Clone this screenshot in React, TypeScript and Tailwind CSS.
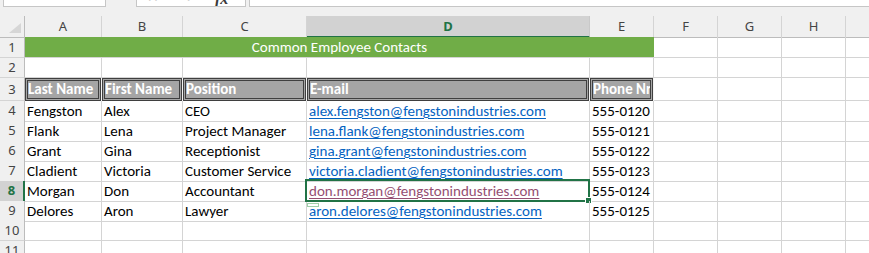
import React from 'react';

// column template: row header, A..H, then the clipped I column
const GRID = 'grid grid-cols-[25px_77px_81px_124px_283px_64px_64px_64px_64px_64px]';
const CELL = 'border-r border-b border-[#d4d4d4] overflow-visible whitespace-nowrap';
const ROWHEAD =
  'border-r border-b border-r-[#bcbcbc] border-b-[#d4d4d4] bg-[#f0f0f0] text-center text-[13px] text-[#444] font-[Noto_Sans,sans-serif]';

const letters = ['A', 'B', 'C', 'D', 'E', 'F', 'G', 'H', 'I'];

const people = [
  ['Fengston', 'Alex', 'CEO', 'alex.fengston@fengstonindustries.com', '555-0120'],
  ['Flank', 'Lena', 'Project Manager', 'lena.flank@fengstonindustries.com', '555-0121'],
  ['Grant', 'Gina', 'Receptionist', 'gina.grant@fengstonindustries.com', '555-0122'],
  ['Cladient', 'Victoria', 'Customer Service', 'victoria.cladient@fengstonindustries.com', '555-0123'],
  ['Morgan', 'Don', 'Accountant', 'don.morgan@fengstonindustries.com', '555-0124'],
  ['Delores', 'Aron', 'Lawyer', 'aron.delores@fengstonindustries.com', '555-0125'],
];

function FormulaBar() {
  return (
    <div className="h-[16px] bg-[#f0f0f0] flex items-start">
      <div className="ml-[3px] w-[103px] h-[7px] bg-white border border-t-0 border-[#c6c6c6]" />
      <div className="ml-[30px] w-[110px] h-[7px] bg-white border border-t-0 border-[#c6c6c6] overflow-hidden">
        <div className="flex items-start -mt-[13px] h-[20px] font-['Liberation_Serif',serif]">
          <span className="ml-[10px] text-[14px] text-[#c4c4c4]">✕</span>
          <span className="ml-[26px] text-[14px] text-[#c4c4c4]">✓</span>
          <span className="ml-[18px] text-[16px] italic font-bold text-[#3a3a3a]">fx</span>
        </div>
      </div>
      <div className="ml-[3px] flex-1 h-[7px] bg-white border border-t-0 border-r-0 border-[#c6c6c6] overflow-hidden">
        <div className="-mt-[15px] pl-[9px] text-[14px] leading-[17px] font-['Carlito','Lato',sans-serif] text-black whitespace-nowrap">
          don.morgan@fengstonindustries.com
        </div>
      </div>
    </div>
  );
}

function ColumnHeaders() {
  return (
    <div className={`${GRID} h-[21px]`}>
      <div className="border-r border-b border-r-[#bcbcbc] border-b-[#bcbcbc] bg-[#f0f0f0] relative">
        <svg className="absolute left-[9px] top-[7px]" width="13" height="11" viewBox="0 0 13 11">
          <polygon points="12,0 12,10 0,10" fill="#d6d6d6" />
        </svg>
      </div>
      {letters.map((l) =>
        l === 'D' ? (
          <div
            key={l}
            className="border-r border-r-[#c9c9c9] border-b-2 border-b-[#217346] bg-[#d2d2d2] text-center text-[13px] leading-[20px] font-bold text-[#217346] font-[Noto_Sans,sans-serif]"
          >
            {l}
          </div>
        ) : (
          <div
            key={l}
            className="border-r border-b border-r-[#d4d4d4] border-b-[#bcbcbc] bg-[#f0f0f0] text-center text-[13px] leading-[20px] text-[#444] font-[Noto_Sans,sans-serif]"
          >
            {l}
          </div>
        )
      )}
    </div>
  );
}

function Link({ text, visited }: { text: string; visited?: boolean }) {
  return (
    <span
      className={`underline decoration-1 underline-offset-2 ${visited ? 'text-[#954f72]' : 'text-[#0563c1]'}`}
    >
      {text}
    </span>
  );
}

export default function App() {
  return (
    <div className="w-[869px] h-[253px] overflow-hidden bg-white font-['Carlito','Lato',sans-serif] text-[15px] text-black">
      <FormulaBar />
      <ColumnHeaders />

      {/* row 1: merged title */}
      <div className={`${GRID} h-[21px]`}>
        <div className={`${ROWHEAD} leading-[20px]`}>1</div>
        <div className="col-span-5 border-b border-[#d4d4d4] bg-[#70ad47] text-white text-center leading-[20px]">
          Common Employee Contacts
        </div>
        {letters.slice(5).map((l) => (
          <div key={l} className={CELL} />
        ))}
      </div>

      {/* row 2: empty */}
      <div className={`${GRID} h-[20px]`}>
        <div className={`${ROWHEAD} leading-[19px]`}>2</div>
        {letters.map((l) => (
          <div key={l} className={CELL} />
        ))}
      </div>

      {/* row 3: check-cell styled headings */}
      <div className={`${GRID} h-[23px]`}>
        <div className={`${ROWHEAD} leading-[22px]`}>3</div>
        {['Last Name', 'First Name', 'Position', 'E-mail', 'Phone Nr'].map((h) => (
          <div key={h} className="border-r border-[#f4f4f4] whitespace-nowrap">
            <div className="h-full border-[3px] border-double border-[#3f3f3f] bg-[#a5a5a5] text-white font-bold leading-[17px] overflow-hidden">
              {h}
            </div>
          </div>
        ))}
        {letters.slice(5).map((l) => (
          <div key={l} className={CELL} />
        ))}
      </div>

      {/* rows 4-9: people */}
      {people.map((p, i) => {
        const n = i + 4;
        const selected = n === 8;
        return (
          <div key={n} className={`${GRID} h-[20px]`}>
            {selected ? (
              <div className="border-r-2 border-b border-r-[#217346] border-b-[#c9c9c9] bg-[#d2d2d2] text-center text-[13px] leading-[19px] font-bold text-[#217346] font-[Noto_Sans,sans-serif]">
                {n}
              </div>
            ) : (
              <div className={`${ROWHEAD} leading-[19px]`}>{n}</div>
            )}
            <div className={`${CELL} pl-[2px] leading-[20px]`}>{p[0]}</div>
            <div className={`${CELL} pl-[2px] leading-[20px]`}>{p[1]}</div>
            <div className={`${CELL} pl-[2px] leading-[20px]`}>{p[2]}</div>
            <div className={`${CELL} pl-[2px] leading-[20px] relative`}>
              <Link text={p[3]} visited={selected} />
              {selected && (
                <div className="absolute -left-[2px] -top-[2px] -right-[1px] -bottom-[1px] border-2 border-[#217346]">
                  <div className="absolute -right-[4px] -bottom-[4px] w-[7px] h-[7px] bg-[#217346] border border-white" />
                </div>
              )}
              {n === 9 && (
                <div className="absolute left-0 top-[2px] w-[12px] h-[4px] border border-[#9fcfa9] bg-white" />
              )}
            </div>
            <div className={`${CELL} pl-[2px] leading-[20px]`}>{p[4]}</div>
            {letters.slice(5).map((l) => (
              <div key={l} className={CELL} />
            ))}
          </div>
        );
      })}

      {/* rows 10-11: empty */}
      {[10, 11].map((n) => (
        <div key={n} className={`${GRID} h-[20px]`}>
          <div className={`${ROWHEAD} leading-[19px]`}>{n}</div>
          {letters.map((l) => (
            <div key={l} className={CELL} />
          ))}
        </div>
      ))}
    </div>
  );
}
